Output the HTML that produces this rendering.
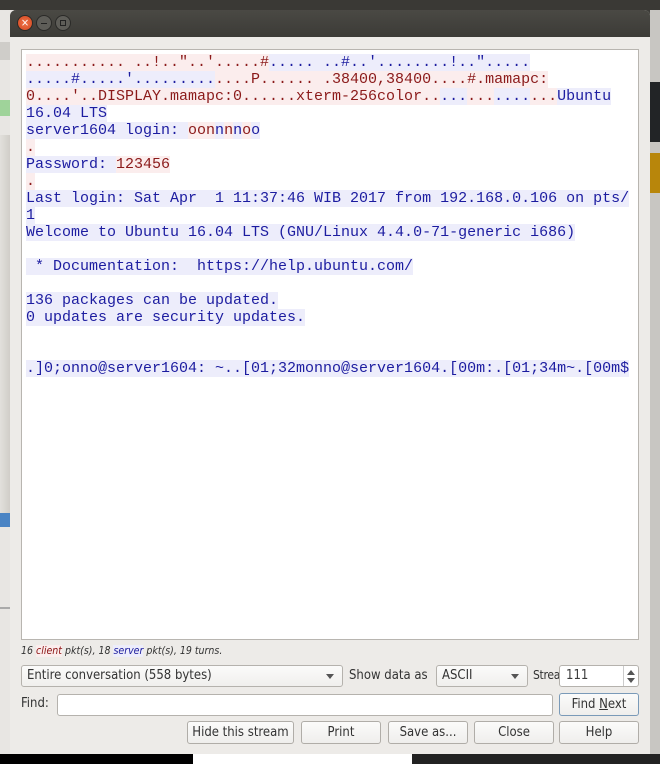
<!DOCTYPE html>
<html><head><meta charset="utf-8"><style>
*{margin:0;padding:0;box-sizing:border-box}
body{width:660px;height:764px;overflow:hidden;position:relative;background:#3c3b37;font-family:"DejaVu Sans Condensed","DejaVu Sans","Liberation Sans",sans-serif;font-size:12px;color:#3c3c3c}
.abs{position:absolute}
#left{left:0;top:10px;width:14px;height:744px;background:#e8e6e3}
#right{left:650px;top:10px;width:10px;height:744px;background:#c8c6c2}
#dlg{left:10px;top:10px;width:640px;height:744px;background:#edebe8;border-radius:6px 6px 0 0;overflow:hidden}
#tb{left:0;top:0;width:640px;height:27px;background:linear-gradient(#4a4944,#3c3b37)}
.btn3{position:absolute;top:5px;width:16px;height:16px;border-radius:50%;border:1px solid #2a2a28}
#text{left:11px;top:39px;width:618px;height:591px;background:#fff;border:1px solid #b8b5b0}
#mono{position:absolute;left:4px;top:4px;font-family:"Liberation Mono",monospace;font-size:15px;line-height:17px}
#mono div{height:17px;white-space:pre}
.r{color:#8b1a1a;background:#fbeded}
.b{color:#1c1ca0;background:#ededfb}
.box{position:absolute;background:#fff;border:1px solid #b5b2ad;border-radius:3px}
.cb{position:absolute;background:linear-gradient(#fbfbfa,#f0efed);border:1px solid #b5b2ad;border-radius:3px;padding-left:5px;line-height:20px;font-size:13px;color:#333}
.arr{position:absolute;right:8px;top:8px;width:0;height:0;border-left:4px solid transparent;border-right:4px solid transparent;border-top:5px solid #555}
.pb{position:absolute;height:23px;background:linear-gradient(#fbfbfa,#efeeec);border:1px solid #b0ada8;border-radius:3px;text-align:center;line-height:21px;font-size:13px;color:#333}
.lbl{position:absolute;font-size:13px;color:#333}
</style></head><body>
<div class="abs" style="left:0;top:0;width:660px;height:10px;background:#3a3935"></div>
<div id="left" class="abs">
 <div class="abs" style="left:0;top:32px;width:14px;height:18px;background:#cfcdc9"></div>
 <div class="abs" style="left:0;top:90px;width:14px;height:16px;background:#9fd39a"></div>
 <div class="abs" style="left:0;top:125px;width:14px;height:380px;background:linear-gradient(90deg,#e2e0dc,#c9c6c0)"></div>
 <div class="abs" style="left:0;top:503px;width:14px;height:14px;background:#4a84c4"></div>
 <div class="abs" style="left:0;top:597px;width:14px;height:2px;background:#aaa"></div>
</div>
<div id="right" class="abs">
 <div class="abs" style="left:0;top:72px;width:10px;height:60px;background:#222426"></div>
 <div class="abs" style="left:0;top:143px;width:10px;height:40px;background:#b8860b"></div>
</div>
<div class="abs" style="left:0;top:754px;width:193px;height:10px;background:#000"></div>
<div class="abs" style="left:193px;top:754px;width:219px;height:10px;background:#fff"></div>
<div class="abs" style="left:412px;top:754px;width:248px;height:10px;background:#222"></div>
<div id="dlg" class="abs">
 <div id="tb" class="abs">
  <div class="btn3" style="left:7px;background:radial-gradient(#f0744a,#d2461e);color:#fff;font-size:11px;line-height:14px;text-align:center">×</div>
  <div class="btn3" style="left:26px;background:#5e5d58"><div class="abs" style="left:4px;top:7px;width:6px;height:1px;background:#222"></div></div>
  <div class="btn3" style="left:45px;background:#5e5d58"><div class="abs" style="left:4px;top:4px;width:6px;height:6px;border:1px solid #222"></div></div>
 </div>
 <div id="text" class="abs"><div id="mono"><div><span class="r">........... ..!.."..'.....#</span><span class="b">..... ..#..'........!..".....</span></div><div><span class="b">.....#.....'.........</span><span class="r">....P...... .38400,38400....#.mamapc:</span></div><div><span class="r">0....'..DISPLAY.mamapc:0......xterm-256color..</span><span class="b">...</span><span class="r">...</span><span class="b">....</span><span class="r">...</span><span class="b">Ubuntu</span></div><div><span class="b">16.04 LTS</span></div><div><span class="b">server1604 login: </span><span class="r">oon</span><span class="b">n</span><span class="r">n</span><span class="b">n</span><span class="r">o</span><span class="b">o</span></div><div><span class="r">.</span></div><div><span class="b">Password: </span><span class="r">123456</span></div><div><span class="r">.</span></div><div><span class="b">Last login: Sat Apr  1 11:37:46 WIB 2017 from 192.168.0.106 on pts/</span></div><div><span class="b">1</span></div><div><span class="b">Welcome to Ubuntu 16.04 LTS (GNU/Linux 4.4.0-71-generic i686)</span></div><div></div><div><span class="b"> * Documentation:  https://help.ubuntu.com/</span></div><div></div><div><span class="b">136 packages can be updated.</span></div><div><span class="b">0 updates are security updates.</span></div><div></div><div></div><div><span class="b">.]0;onno@server1604: ~..[01;32monno@server1604.[00m:.[01;34m~.[00m$</span></div></div></div>
 <div class="abs" style="left:11px;top:635px;font-size:10.5px;font-style:italic;color:#333">16 <span style="color:#8b1212;background:#fbeded">client</span> pkt(s), 18 <span style="color:#1a1a9c;background:#ededfb">server</span> pkt(s), 19 turns.</div>
 <div class="cb" style="left:11px;top:655px;width:322px;height:22px">Entire conversation (558 bytes)<div class="arr"></div></div>
 <div class="lbl" style="left:339px;top:658px">Show data as</div>
 <div class="cb" style="left:426px;top:655px;width:92px;height:22px">ASCII<div class="arr"></div></div>
 <div class="lbl" style="left:523px;top:658px;font-size:12px;letter-spacing:-0.3px">Stream</div>
 <div class="box" style="left:549px;top:655px;width:80px;height:22px;padding-left:6px;line-height:20px;font-size:13px">111
  <div class="abs" style="left:63px;top:0;width:1px;height:20px;background:#ccc"></div>
  <div class="abs" style="left:67px;top:4px;border-left:4px solid transparent;border-right:4px solid transparent;border-bottom:5px solid #555"></div>
  <div class="abs" style="left:67px;top:12px;border-left:4px solid transparent;border-right:4px solid transparent;border-top:5px solid #555"></div>
 </div>
 <div class="lbl" style="left:11px;top:686px">Find:</div>
 <div class="box" style="left:47px;top:684px;width:496px;height:22px"></div>
 <div class="pb" style="left:549px;top:683px;width:80px;border-color:#7a9ab8">Find <u>N</u>ext</div>
 <div class="pb" style="left:177px;top:711px;width:107px">Hide this stream</div>
 <div class="pb" style="left:291px;top:711px;width:80px">Print</div>
 <div class="pb" style="left:378px;top:711px;width:80px">Save as...</div>
 <div class="pb" style="left:464px;top:711px;width:80px">Close</div>
 <div class="pb" style="left:549px;top:711px;width:80px">Help</div>
</div>
</body></html>
